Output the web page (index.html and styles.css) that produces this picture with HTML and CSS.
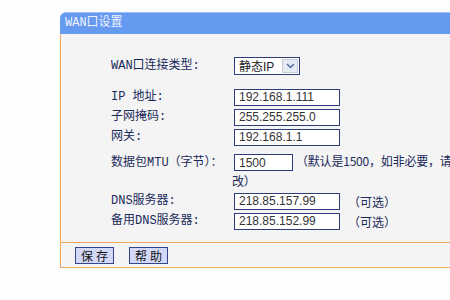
FILE: index.html
```html
<!DOCTYPE html>
<html lang="zh-CN">
<head>
    <meta charset="UTF-8">
    <title>WAN口设置</title>
    <link rel="stylesheet" href="styles.css">
</head>
<body>
    <div class="panel">
        <div class="panel-title">WAN口设置</div>
        <div class="panel-body">
            <div class="row row-type">
                <span class="label">WAN口连接类型:</span>
                <div class="select">
                    <span class="select-text">静态IP</span>
                    <span class="select-arrow">
                        <svg width="9" height="6" viewBox="0 0 9 6"><path d="M1 1 L4.5 4.5 L8 1" fill="none" stroke="#4a6aa8" stroke-width="1.5"/></svg>
                    </span>
                </div>
            </div>

            <div class="row">
                <span class="label">IP 地址:</span>
                <input class="field" type="text" value="192.168.1.111">
            </div>
            <div class="row">
                <span class="label">子网掩码:</span>
                <input class="field" type="text" value="255.255.255.0">
            </div>
            <div class="row">
                <span class="label">网关:</span>
                <input class="field" type="text" value="192.168.1.1">
            </div>

            <div class="row row-mtu">
                <span class="label label-mtu">数据包MTU（字节）：</span>
                <div class="mtu-cell">
                    <input class="field field-short" type="text" value="1500"><span class="hint hint-mtu">（默认是1500，如非必要，请勿更<br>改）</span>
                </div>
            </div>

            <div class="row">
                <span class="label">DNS服务器:</span>
                <input class="field" type="text" value="218.85.157.99">
                <span class="hint">（可选）</span>
            </div>
            <div class="row">
                <span class="label">备用DNS服务器:</span>
                <input class="field" type="text" value="218.85.152.99">
                <span class="hint">（可选）</span>
            </div>
        </div>
        <div class="panel-footer">
            <button type="submit">保存</button>
            <button type="button">帮助</button>
        </div>
    </div>
</body>
</html>
```

FILE: styles.css
```css
body {
    margin: 0;
    background: #fefefe;
    overflow: hidden;
    font-family: "Liberation Mono", "Noto Sans CJK SC", monospace;
    font-size: 12px;
    color: #1a2a5a;
}
.panel {
    margin: 12px 0 0 60px;
    width: 420px;
}
.panel-title {
    height: 21px;
    line-height: 21px;
    padding-left: 5px;
    background: #6699f0;
    border-top: 1px solid #9bbcff;
    border-radius: 6px 0 0 0;
    color: #eef2ff;
    font-size: 12px;
}
.panel-body {
    background: #f4f4f4;
    border-left: 1px solid #f0a860;
    border-bottom: 1px solid #f0a860;
    padding: 23px 0 11px 50px;
}
.row {
    display: flex;
    align-items: center;
    height: 20px;
}
.row-type {
    height: 17px;
    margin-bottom: 13px;
}
.label {
    width: 123px;
    flex-shrink: 0;
    white-space: nowrap;
    line-height: 16px;
}
.label-mtu {
    align-self: flex-start;
    margin-top: 4px;
}
.field {
    box-sizing: border-box;
    width: 106px;
    height: 17px;
    margin: 0;
    padding: 0 4px;
    border: 1px solid #2e3c7c;
    background: #fff;
    font-family: "Liberation Sans", Arial, sans-serif;
    font-size: 12px;
    color: #333;
}
.field-short {
    width: 59px;
    vertical-align: middle;
}
.hint {
    margin-left: 8px;
    font-family: "Noto Sans CJK SC", sans-serif;
    white-space: nowrap;
}
.hint-mtu {
    margin-left: 3px;
    letter-spacing: -0.2px;
}
.row-mtu {
    height: 40px;
    margin-top: 4px;
}
.mtu-cell {
    line-height: 20px;
    white-space: nowrap;
    margin-left: -2px;
    font-family: "Noto Sans CJK SC", sans-serif;
}
.mtu-cell .field-short {
    margin-left: 2px;
}
.select {
    box-sizing: border-box;
    width: 66px;
    height: 18px;
    display: flex;
    align-items: center;
    justify-content: space-between;
    border: 1px solid #2e3c7c;
    background: #fff;
}
.select-text {
    padding-left: 4px;
    font-family: "Liberation Sans", "Noto Sans CJK SC", sans-serif;
    color: #222;
    font-size: 12px;
}
.select-arrow {
    width: 16px;
    height: 14px;
    margin-right: 1px;
    display: flex;
    align-items: center;
    justify-content: center;
    background: #e6eaf2;
    border: 1px solid #c4cad8;
    box-sizing: border-box;
}
.panel-footer {
    display: flex;
    align-items: center;
    gap: 15px;
    height: 24px;
    padding-left: 14px;
    background: #f4f4f6;
    border-left: 1px solid #f0a860;
    border-bottom: 1px solid #f0a860;
}
button {
    width: 39px;
    height: 17px;
    padding: 0;
    border: 1px solid #34458c;
    background: #d2d8f6;
    font-family: "Noto Sans CJK SC", sans-serif;
    font-size: 12px;
    letter-spacing: 3px;
    text-indent: 3px;
    color: #111;
    line-height: 15px;
}
```
